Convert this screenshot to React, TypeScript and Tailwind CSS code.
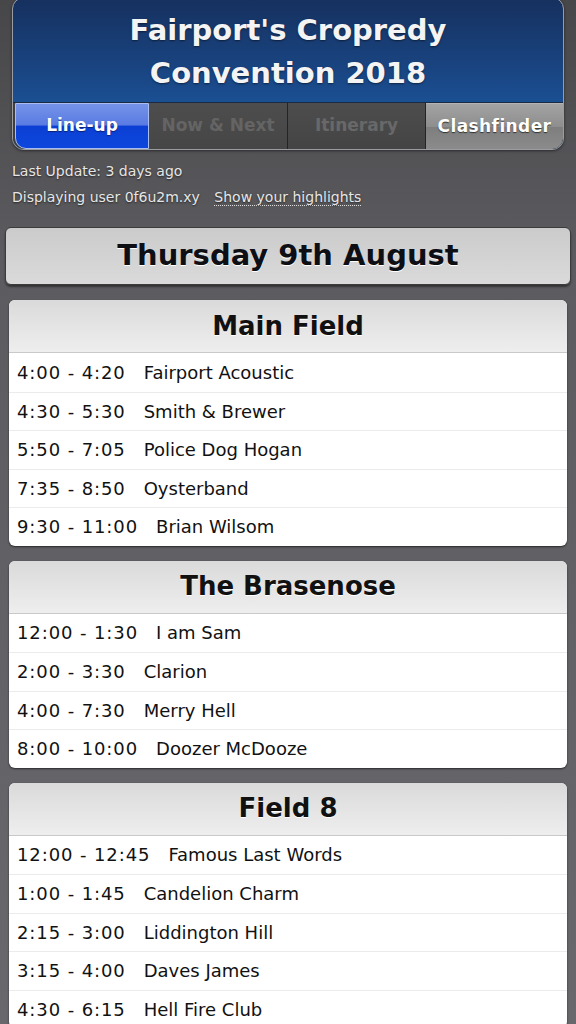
const stages = [
  {
    name: "Main Field",
    sets: [
      ["4:00 - 4:20", "Fairport Acoustic"],
      ["4:30 - 5:30", "Smith & Brewer"],
      ["5:50 - 7:05", "Police Dog Hogan"],
      ["7:35 - 8:50", "Oysterband"],
      ["9:30 - 11:00", "Brian Wilsom"],
    ],
  },
  {
    name: "The Brasenose",
    sets: [
      ["12:00 - 1:30", "I am Sam"],
      ["2:00 - 3:30", "Clarion"],
      ["4:00 - 7:30", "Merry Hell"],
      ["8:00 - 10:00", "Doozer McDooze"],
    ],
  },
  {
    name: "Field 8",
    sets: [
      ["12:00 - 12:45", "Famous Last Words"],
      ["1:00 - 1:45", "Candelion Charm"],
      ["2:15 - 3:00", "Liddington Hill"],
      ["3:15 - 4:00", "Daves James"],
      ["4:30 - 6:15", "Hell Fire Club"],
    ],
  },
];

function Tabs() {
  return (
    <div className="grid grid-cols-[134px_139px_138px_1fr] h-[47px] border-t border-[#1b2a44] bg-[#3e3e3e] pl-[2px]">
      <div className="flex items-center justify-center rounded-bl-[11px] border border-[#a9bdf0] bg-[linear-gradient(#7593e8,#5a7be3_48%,#0c3fd4_50%,#0c47dd)] text-[17px] font-bold text-white [text-shadow:0_1px_1px_#0a2270]">
        Line-up
      </div>
      <div className="flex items-center justify-center border-r border-[#242424] bg-[linear-gradient(#4d4d4d,#464646)] text-[17px] font-bold text-[#646464]">
        Now &amp; Next
      </div>
      <div className="flex items-center justify-center border-r border-[#242424] bg-[linear-gradient(#4d4d4d,#444)] text-[17px] font-bold text-[#686868]">
        Itinerary
      </div>
      <div className="flex items-center justify-center rounded-br-[11px] border-t border-[#b5b5b5] bg-[linear-gradient(#a3a3a3,#8e8e8e_50%,#7e7e7e_52%,#8b8b8b)] text-[17px] font-bold tracking-[0.4px] text-white [text-shadow:0_1px_1px_#333]">
        Clashfinder
      </div>
    </div>
  );
}

function Stage({ name, sets }: { name: string; sets: string[][] }) {
  return (
    <section className="mx-[9px] overflow-hidden rounded-[6px] bg-white shadow-[0_1px_2px_rgba(0,0,0,0.6)]">
      <h2 className="flex h-[53px] items-center justify-center border-b border-[#c9c9c9] bg-[linear-gradient(#dadada,#eeeeee)] text-[26px] font-bold text-[#111] [text-shadow:0_1px_0_#fff]">
        {name}
      </h2>
      {sets.map(([time, act], i) => (
        <div
          key={act}
          className={`flex h-[38.5px] items-center pl-[8px] text-[18px] text-[#111] ${i > 0 ? "border-t border-[#ebebeb]" : ""}`}
        >
          <span className="tracking-[0.9px]">{time}</span>
          <span className="ml-[18px]">{act}</span>
        </div>
      ))}
    </section>
  );
}

export default function App() {
  return (
    <div className="min-h-[1024px] bg-[linear-gradient(#474648,#5c5b5f_25%,#626166_60%,#69686c)] pb-6 font-['DejaVu_Sans','Verdana',sans-serif]">
      <header className="mx-[12px] -mt-[3px] overflow-hidden rounded-[12px] border border-[#9a9ca2] bg-[linear-gradient(#16305e,#1a4888_55%,#1a61aa)] shadow-[0_1px_3px_rgba(0,0,0,0.5)]">
        <div className="flex h-[104px] flex-col items-center justify-center pt-[3px] text-[29px] font-bold leading-[43px] text-[#f4f4f4] [text-shadow:0_1px_2px_rgba(0,0,0,0.5)]">
          <div>Fairport's Cropredy</div>
          <div>Convention 2018</div>
        </div>
        <Tabs />
      </header>

      <div className="px-[12px] pt-[8px] text-[14px] leading-[26px] text-[#e6e6e6] [text-shadow:0_1px_2px_rgba(0,0,0,0.6)]">
        <div>Last Update: 3 days ago</div>
        <div>
          Displaying user 0f6u2m.xy{" "}
          <span className="ml-[10px] border-b border-dotted border-[#ddd] leading-[18px]">
            Show your highlights
          </span>
        </div>
      </div>

      <div className="mx-[5px] mt-[17px] flex h-[58px] items-center justify-center rounded-[6px] border border-[#3c3c3c] bg-[linear-gradient(#cbcbcb,#dadada)] text-[29px] font-bold text-[#0d0f14] shadow-[0_2px_2px_rgba(0,0,0,0.45)] [text-shadow:0_1px_0_#fff]">
        Thursday 9th August
      </div>

      <div className="mt-[15px] flex flex-col gap-[15px]">
        {stages.map((s) => (
          <Stage key={s.name} name={s.name} sets={s.sets} />
        ))}
      </div>
    </div>
  );
}
